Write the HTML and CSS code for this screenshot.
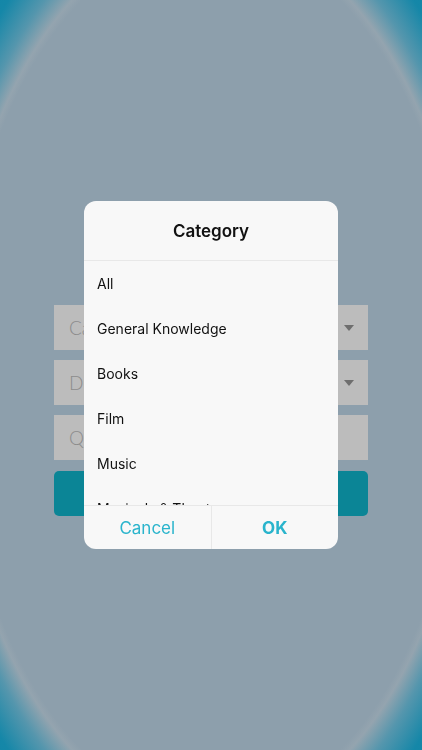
FILE: index.html
```html
<!DOCTYPE html>
<html>
<head>
<meta charset="utf-8">
<link rel="stylesheet" href="styles.css">
</head>
<body>
<div class="page">
  <form class="form">
    <div class="field select"><span class="label">Category</span><span class="caret"></span></div>
    <div class="field select"><span class="label">Difficulty</span><span class="caret"></span></div>
    <div class="field"><span class="label">Questions</span></div>
    <div class="start">Start</div>
  </form>
</div>
<div class="overlay">
  <div class="dialog">
    <div class="dialog-title">Category</div>
    <ul class="options">
      <li>All</li>
      <li>General Knowledge</li>
      <li>Books</li>
      <li>Film</li>
      <li>Music</li>
      <li>Musicals &amp; Theatres</li>
      <li>Television</li>
    </ul>
    <div class="actions">
      <button class="action">Cancel</button>
      <button class="action ok">OK</button>
    </div>
  </div>
</div>
</body>
</html>
```

FILE: styles.css
```css
html, body {
  margin: 0;
  padding: 0;
}
body {
  width: 422px;
  height: 750px;
  overflow: hidden;
  font-family: "Inter", "Roboto", "Liberation Sans", sans-serif;
  background: radial-gradient(261px 449px at 211px 375px, #8d9fac 0%, #8d9fac 97%, #94a4af 99%, #5596ad 105%, #1587a8 114%, #0a84a7 130%);
}
.page {
  height: 750px;
}
.form {
  margin: 0;
  padding: 305px 54px 0;
  display: flex;
  flex-direction: column;
  gap: 10px;
}
.field {
  height: 45px;
  background: #bcbcbc;
  display: flex;
  align-items: center;
  justify-content: space-between;
  padding: 0 14px 0 15px;
  box-sizing: border-box;
}
.label {
  font-family: "Lato", "Open Sans", sans-serif;
  font-weight: 300;
  font-size: 19px;
  color: #8c8c8c;
}
.caret {
  width: 0;
  height: 0;
  border-left: 5px solid transparent;
  border-right: 5px solid transparent;
  border-top: 6px solid #6e6e6e;
}
.start {
  height: 45px;
  margin-top: 1px;
  background: #0b8596;
  border-radius: 5px;
  color: #fff;
  display: flex;
  align-items: center;
  justify-content: center;
  font-size: 18px;
}
.overlay {
  position: fixed;
  inset: 0;
  display: flex;
  align-items: center;
  justify-content: center;
}
.dialog {
  width: 254px;
  height: 348px;
  background: #f8f8f8;
  border-radius: 12px;
  overflow: hidden;
  display: flex;
  flex-direction: column;
}
.dialog-title {
  height: 60px;
  flex: none;
  display: flex;
  align-items: center;
  justify-content: center;
  font-size: 17px;
  font-weight: 600;
  color: #111;
  border-bottom: 1px solid #e8e8e8;
  box-sizing: border-box;
}
.options {
  list-style: none;
  margin: 0;
  padding: 0;
  flex: 1;
  overflow: hidden;
}
.options li {
  height: 45px;
  display: flex;
  align-items: center;
  padding: 0 13px;
  font-size: 14px;
  color: #111;
}
.actions {
  height: 44px;
  flex: none;
  display: flex;
  border-top: 1px solid #e8e8e8;
  box-sizing: border-box;
}
.action {
  flex: 1;
  border: 0;
  background: transparent;
  font-family: inherit;
  font-size: 17px;
  color: #2ab4cc;
  padding: 0;
}
.action + .action {
  border-left: 1px solid #e8e8e8;
}
.ok {
  font-weight: 700;
}
```
